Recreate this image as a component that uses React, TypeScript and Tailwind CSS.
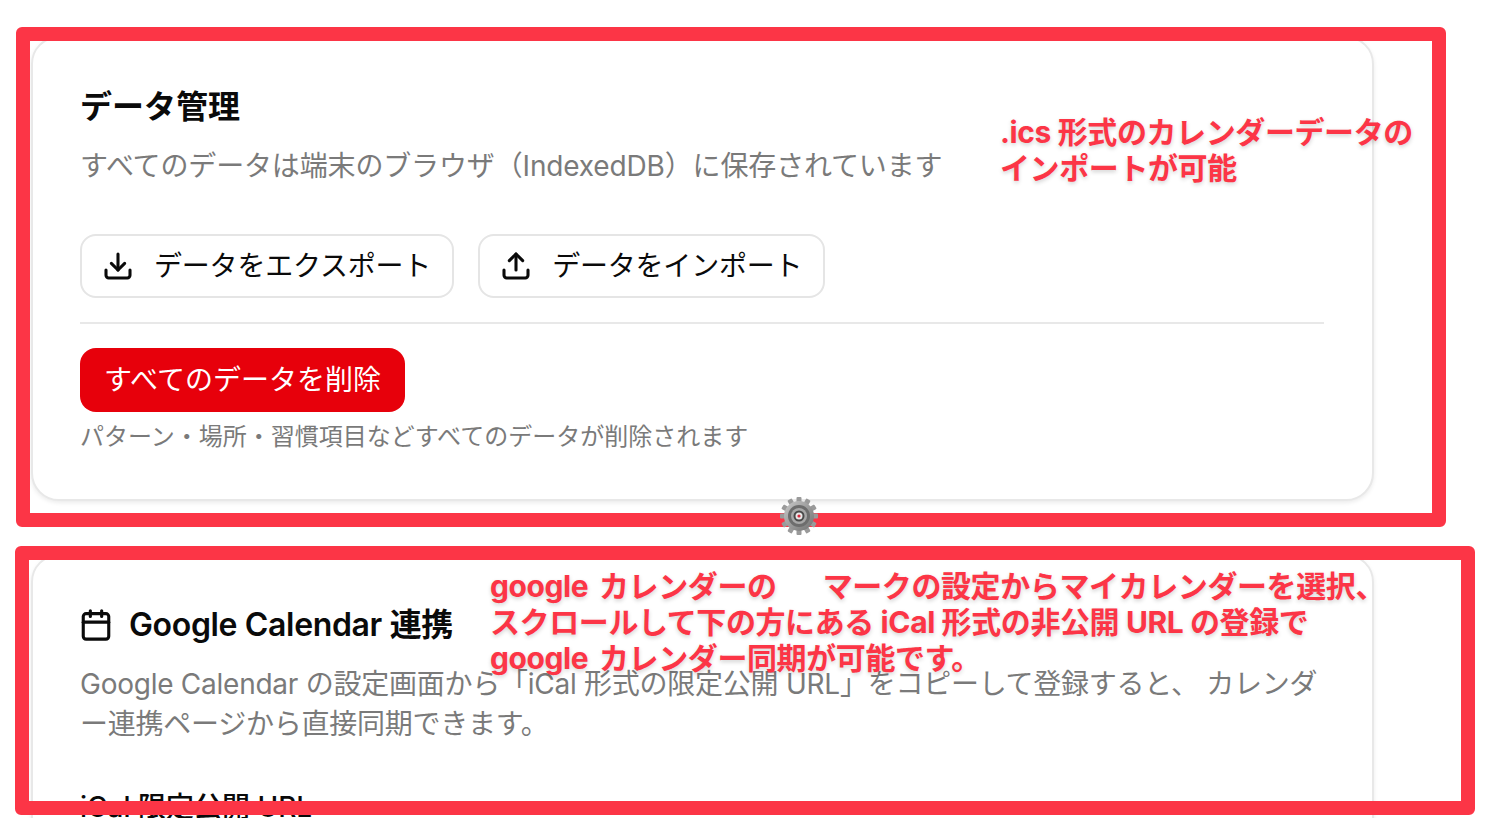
import { Calendar, Download, Upload } from 'lucide-react';

const FONT = "font-['Inter','Noto_Sans_CJK_JP',sans-serif]";
const NOTE = "whitespace-nowrap text-[30px] leading-[36px] font-bold tracking-[-0.4px] text-[#fc3546] [text-shadow:0_2px_4px_rgba(0,0,0,0.18)]";

function Gear() {
  const teeth = Array.from({ length: 12 }, (_, i) => i * 30);
  return (
    <svg viewBox="0 0 40 40" className="absolute left-[779px] top-[496px] h-10 w-10">
      <defs>
        <linearGradient id="gearBody" x1="0" y1="0" x2="1" y2="1">
          <stop offset="0" stopColor="#c9c9c9" />
          <stop offset="1" stopColor="#6f6f6f" />
        </linearGradient>
      </defs>
      {teeth.map(a => (
        <rect key={a} x="17.5" y="1" width="5" height="7" rx="1" fill="#9a9a9a" transform={`rotate(${a} 20 20)`} />
      ))}
      <circle cx="20" cy="20" r="15" fill="url(#gearBody)" />
      <circle cx="20" cy="20" r="11" fill="#6d6d6d" />
      <circle cx="20" cy="20" r="8" fill="#a8a8a8" />
      <circle cx="20" cy="20" r="5.5" fill="#4a4a4a" />
      <circle cx="20" cy="20" r="3.5" fill="#e8e8e8" />
      <circle cx="20" cy="20" r="1.6" fill="#d8293c" />
    </svg>
  );
}

function OutlineButton({ icon, label }: { icon: React.ReactNode; label: string }) {
  return (
    <button className="flex h-[64px] items-center gap-[20px] rounded-[16px] border-2 border-[#e5e5e5] bg-white pl-[20px] pr-[21px] text-[28px] tracking-[-0.2px] text-[#0a0a0a]">
      {icon}
      <span>{label}</span>
    </button>
  );
}

export default function App() {
  return (
    <div className={`relative h-[818px] w-[1502px] overflow-hidden bg-white ${FONT}`}>
      <div className="flex flex-col gap-[53px] pl-[31px] pt-[36px]">
        <section className="w-[1343px] rounded-[28px] border-2 border-[#e8e8e8] bg-white pb-[44px] pl-[47px] pr-[48px] pt-[49px] shadow-[0_2px_4px_rgba(0,0,0,0.08)]">
          <h2 className="text-[32px] leading-[40px] font-semibold text-[#0a0a0a]">データ管理</h2>
          <p className="mt-[19px] whitespace-nowrap text-[28px] leading-[40px] tracking-[-0.15px] text-[#7a7a7a]">すべてのデータは端末のブラウザ（IndexedDB）に保存されています</p>
          <div className="mt-[48px] flex gap-[24px]">
            <OutlineButton icon={<Download size={32} strokeWidth={2.3} />} label="データをエクスポート" />
            <OutlineButton icon={<Upload size={32} strokeWidth={2.3} />} label="データをインポート" />
          </div>
          <div className="mt-[24px] h-[2px] bg-[#e8e8e8]" />
          <button className="mt-[24px] flex h-[64px] items-center rounded-[16px] bg-[#e7000b] px-[24px] text-[28px] text-white">すべてのデータを削除</button>
          <p className="mt-[7px] text-[24px] leading-[36px] text-[#7a7a7a]">パターン・場所・習慣項目などすべてのデータが削除されます</p>
        </section>

        <section className="w-[1343px] rounded-[28px] border-2 border-[#e8e8e8] bg-white pb-[48px] pl-[47px] pr-[48px] pt-[49px] shadow-[0_2px_4px_rgba(0,0,0,0.08)]">
          <h2 className="flex items-center gap-[16px] text-[32px] leading-[40px] font-semibold tracking-[-0.35px] text-[#0a0a0a]">
            <Calendar size={34} strokeWidth={2.2} className="-ml-[1px]" />
            Google Calendar 連携
          </h2>
          <p className="mt-[19px] text-[28px] leading-[40px] tracking-[-0.25px] text-[#7a7a7a]">
            Google Calendar の設定画面から「iCal 形式の限定公開 URL」をコピーして登録すると、 カレンダー連携ページから直接同期できます。
          </p>
          <p className="mt-[43px] text-[28px] leading-[40px] font-medium text-[#0a0a0a]">iCal 限定公開 URL</p>
        </section>
      </div>

      <div className="absolute left-[16px] top-[27px] h-[500px] w-[1430px] rounded-[6px] border-[14px] border-[#fc3546]" />
      <div className="absolute left-[15px] top-[546px] h-[269px] w-[1460px] rounded-[6px] border-[14px] border-[#fc3546]" />
      <Gear />

      <div className={`${NOTE} absolute left-[1000px] top-[114px]`}>
        <p>.ics 形式のカレンダーデータの</p>
        <p>インポートが可能</p>
      </div>
      <div className={`${NOTE} absolute left-[490px] top-[568px]`}>
        <p className="flex gap-[46px]">
          <span className="[word-spacing:4px]">google カレンダーの</span>
          <span>マークの設定からマイカレンダーを選択、</span>
        </p>
        <p>スクロールして下の方にある iCal 形式の非公開 URL の登録で</p>
        <p className="[word-spacing:4px]">google カレンダー同期が可能です。</p>
      </div>
    </div>
  );
}
